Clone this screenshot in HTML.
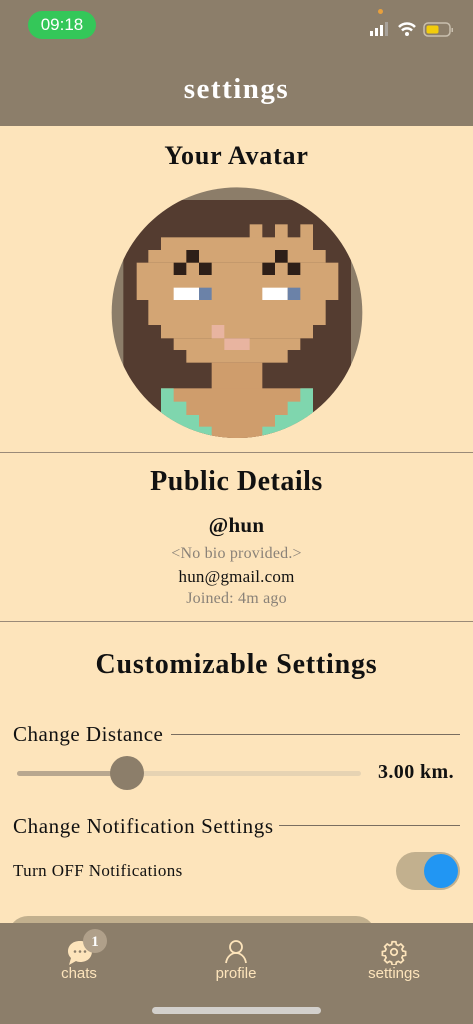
<!DOCTYPE html>
<html><head><meta charset="utf-8"><style>
*{margin:0;padding:0;box-sizing:border-box}
body{width:473px;height:1024px;overflow:hidden;background:#fde4bb;font-family:"Liberation Serif",serif;position:relative;color:#111}
.a{position:absolute}
.c{position:absolute;left:0;width:473px;text-align:center;white-space:nowrap}
.hdr{left:0;top:0;width:473px;height:126px;background:#8c7e6a}
.line{position:absolute;height:1px;background:#9a8a78}
.nav{left:0;top:923px;width:473px;height:101px;background:#8c7e6a}
.lbl{position:absolute;font-family:"Liberation Sans",sans-serif;font-size:15px;color:#fde4bb;text-align:center;width:100px}
</style></head><body>
<div class="a hdr"></div>
<div class="a" style="left:28px;top:11px;width:68px;height:28px;border-radius:14px;background:#34c759;color:#fff;font-family:'Liberation Sans',sans-serif;font-size:17px;text-align:center;line-height:28px">09:18</div>
<div class="a" style="left:378px;top:9px;width:5px;height:5px;border-radius:3px;background:#e8a03c"></div>
<svg class="a" style="left:368px;top:20px" width="90" height="18">
<rect x="2" y="11" width="3" height="5" fill="#fff"/><rect x="7" y="8" width="3" height="8" fill="#fff"/><rect x="12" y="5" width="3" height="11" fill="#fff"/><rect x="17" y="2" width="3" height="14" fill="#bbb" opacity=".6"/>
<path d="M31 7 A11 11 0 0 1 47 7" stroke="#fff" stroke-width="2.5" fill="none"/><path d="M34 10.5 A7 7 0 0 1 44 10.5" stroke="#fff" stroke-width="2.5" fill="none"/><circle cx="39" cy="14" r="2" fill="#fff"/>
<rect x="56" y="3" width="26" height="13" rx="4" fill="none" stroke="#c9bfae" stroke-width="1.5"/><rect x="58.5" y="5.5" width="12" height="8" rx="2" fill="#f2cc0c"/><rect x="83.5" y="8" width="1.5" height="4" fill="#c9bfae"/>
</svg>
<div class="c" style="top:73px;font-size:29px;font-weight:bold;color:#fff;letter-spacing:1.5px">settings</div>
<div class="c" style="top:141px;font-size:26px;font-weight:bold;letter-spacing:0.8px">Your Avatar</div>
<svg class="a" style="left:110px;top:185px" width="254" height="254" viewBox="0 0 762 762">
<defs><clipPath id="cp"><circle cx="381" cy="383" r="376"/></clipPath></defs>
<g clip-path="url(#cp)">
<rect width="762" height="762" fill="#8c7d69"/>
<rect x="40" y="45" width="683" height="720" fill="#543c30"/>
<g fill="#d3a574">
<rect x="419" y="118" width="38" height="40"/><rect x="495" y="118" width="38" height="40"/><rect x="571" y="118" width="38" height="40"/>
<rect x="153" y="157" width="456" height="38"/><rect x="115" y="195" width="532" height="38"/>
<rect x="80" y="233" width="605" height="112"/><rect x="115" y="345" width="532" height="75"/>
<rect x="153" y="420" width="456" height="40"/><rect x="191" y="460" width="380" height="35"/>
<rect x="229" y="495" width="304" height="38"/>
</g>
<rect x="305" y="533" width="152" height="240" fill="#cf9d6c"/>
<rect x="153" y="610" width="456" height="160" fill="#cf9d6c"/>
<g fill="#7fd6ae">
<rect x="153" y="610" width="38" height="160"/><rect x="153" y="650" width="76" height="120"/><rect x="153" y="690" width="114" height="80"/><rect x="153" y="725" width="152" height="45"/>
<rect x="571" y="610" width="38" height="160"/><rect x="533" y="650" width="76" height="120"/><rect x="495" y="690" width="114" height="80"/><rect x="457" y="725" width="152" height="45"/>
</g>
<g fill="#2e1f18">
<rect x="229" y="195" width="38" height="38"/><rect x="191" y="233" width="38" height="37"/><rect x="267" y="233" width="38" height="37"/>
<rect x="495" y="195" width="38" height="38"/><rect x="457" y="233" width="38" height="37"/><rect x="533" y="233" width="38" height="37"/>
</g>
<rect x="191" y="308" width="76" height="37" fill="#fff"/><rect x="267" y="308" width="38" height="37" fill="#6b82a8"/>
<rect x="457" y="308" width="76" height="37" fill="#fff"/><rect x="533" y="308" width="38" height="37" fill="#6b82a8"/>
<rect x="305" y="420" width="38" height="40" fill="#e8b4a0"/><rect x="343" y="460" width="76" height="35" fill="#e8b4a0"/>
</g></svg>
<div class="line" style="left:0;top:452px;width:473px"></div>
<div class="c" style="top:466px;font-size:28px;font-weight:bold;letter-spacing:0.5px">Public Details</div>
<div class="c" style="top:513px;font-size:21px;font-weight:bold;letter-spacing:0.3px">@hun</div>
<div class="c" style="top:545px;font-size:16px;color:#8a8278;letter-spacing:0.2px">&lt;No bio provided.&gt;</div>
<div class="c" style="top:567px;font-size:17px;letter-spacing:0.2px">hun@gmail.com</div>
<div class="c" style="top:590px;font-size:16px;color:#8a8278;letter-spacing:0.2px">Joined: 4m ago</div>
<div class="line" style="left:0;top:621px;width:473px"></div>
<div class="c" style="top:649px;font-size:28px;font-weight:bold;letter-spacing:0.8px">Customizable Settings</div>
<div class="a" style="left:13px;top:722px;font-size:21px;letter-spacing:0.5px">Change Distance</div>
<div class="line" style="left:171px;top:734px;width:289px;background:#7a6e60"></div>
<div class="a" style="left:17px;top:771px;width:344px;height:5px;border-radius:3px;background:#e6d3b3"></div>
<div class="a" style="left:17px;top:771px;width:110px;height:5px;border-radius:3px;background:#b8a78f"></div>
<div class="a" style="left:110px;top:756px;width:34px;height:34px;border-radius:17px;background:#8c7e6a"></div>
<div class="a" style="left:378px;top:761px;font-size:20px;font-weight:bold;letter-spacing:0.4px">3.00 km.</div>
<div class="a" style="left:13px;top:814px;font-size:21px;letter-spacing:0.6px">Change Notification Settings</div>
<div class="line" style="left:279px;top:825px;width:181px;background:#7a6e60"></div>
<div class="a" style="left:13px;top:861px;font-size:17px;letter-spacing:0.4px">Turn OFF Notifications</div>
<div class="a" style="left:396px;top:852px;width:64px;height:38px;border-radius:19px;background:#c2b08e"></div>
<div class="a" style="left:424px;top:854px;width:34px;height:34px;border-radius:17px;background:#2196f3"></div>
<div class="a" style="left:8px;top:916px;width:368px;height:40px;border-radius:20px;background:#c2b08e"></div>
<div class="a nav"></div>
<svg class="a" style="left:66px;top:928px" width="44" height="40">
<path d="M14 13 C6 13 2 18 2 23 C2 26 3 28 5 30 L3 37 L10 33 C11 33.5 12.5 34 14 34 C22 34 26 29 26 23 C26 18 22 13 14 13Z" fill="#fde4bb"/>
<circle cx="9" cy="23.5" r="1.3" fill="#8c7e6a"/><circle cx="14" cy="23.5" r="1.3" fill="#8c7e6a"/><circle cx="19" cy="23.5" r="1.3" fill="#8c7e6a"/>
<circle cx="29" cy="13" r="12" fill="#b0a08a"/>
<text x="29" y="18" text-anchor="middle" font-family="Liberation Serif" font-weight="bold" font-size="15" fill="#fff">1</text>
</svg>
<div class="lbl" style="left:29px;top:965px">chats</div>
<svg class="a" style="left:224px;top:939px" width="24" height="26" fill="none" stroke="#fde4bb" stroke-width="1.8">
<circle cx="12" cy="8" r="6"/><path d="M2 24 C3 17 8 14 12 14 C16 14 21 17 22 24"/></svg>
<div class="lbl" style="left:186px;top:965px">profile</div>
<svg class="a" style="left:381px;top:939px" width="26" height="26" viewBox="0 0 24 24" fill="none" stroke="#fde4bb" stroke-width="1.6">
<circle cx="12" cy="12" r="3"/>
<path d="M10.3 2.5h3.4l.5 2.6 1.8.9 2.3-1.4 2.4 2.4-1.4 2.3.8 1.8 2.6.5v3.4l-2.6.5-.8 1.8 1.4 2.3-2.4 2.4-2.3-1.4-1.8.8-.5 2.6h-3.4l-.5-2.6-1.8-.8-2.3 1.4-2.4-2.4 1.4-2.300-.8-1.8-2.6-.5v-3.4l2.6-.5.8-1.8-1.4-2.3 2.4-2.4 2.3 1.4 1.8-.9z"/></svg>
<div class="lbl" style="left:344px;top:965px">settings</div>
<div class="a" style="left:152px;top:1007px;width:169px;height:7px;border-radius:4px;background:#d3d0cc"></div>
</body></html>
